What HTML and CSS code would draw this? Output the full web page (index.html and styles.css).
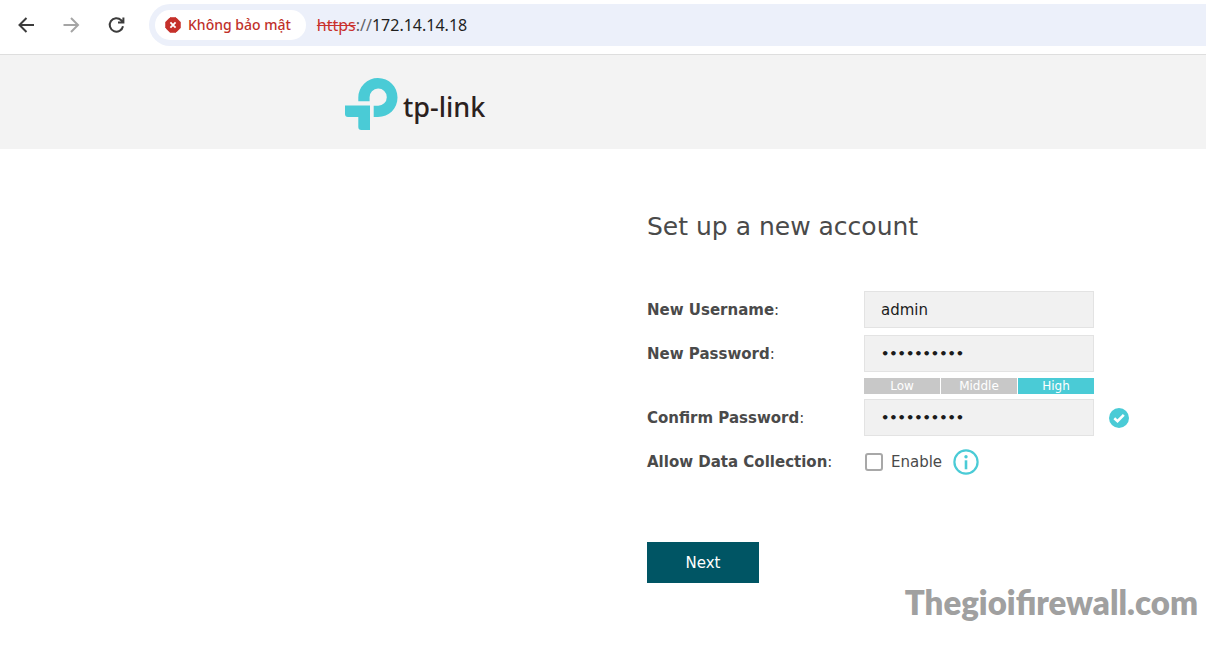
FILE: index.html
```html
<!DOCTYPE html>
<html lang="en">
<head>
<meta charset="utf-8">
<title>TP-Link</title>
<link rel="stylesheet" href="styles.css">
</head>
<body>
<nav class="toolbar" aria-label="Browser">
  <button class="nav-btn" type="button" aria-label="Back">
    <svg width="20" height="20" viewBox="0 0 20 20"><path d="M18 10H4M10.500 3L3.500 10l7 7"/></svg>
  </button>
  <button class="nav-btn nav-off" type="button" aria-label="Forward">
    <svg width="20" height="20" viewBox="0 0 20 20"><path d="M2.5 10h14M10 3l7 7-7 7"/></svg>
  </button>
  <button class="nav-btn" type="button" aria-label="Reload">
    <svg width="20" height="20" viewBox="0 0 20 20"><path d="M17 11.200A6.700 6.700 0 1 1 15.200 5.200L17 7M17.400 2.400v5.200h-5.400"/></svg>
  </button>
  <div class="address">
    <button class="chip" type="button" lang="vi">
      <svg width="16" height="16" viewBox="0 0 16 16"><path fill="#c5302a" d="M5 .8h6L15.2 5v6L11 15.2H5L.8 11V5z" stroke="#c5302a" stroke-linejoin="round"/><path d="M5.4 5.4l5.2 5.2M10.6 5.4l-5.2 5.2" stroke="#fff" stroke-width="1.8"/></svg>
      Không bảo mật
    </button>
    <span class="url"><s>https</s><span class="scheme">://</span>172.14.14.18</span>
  </div>
</nav>

<header class="brand-bar">
  <div class="brand">
    <svg width="53" height="53" viewBox="0 0 53 53" fill="#4acbd6"><path d="M13.300 23.200V19.500A19.600 19.500 0 0 1 33 0C44 0 52.500 8.500 52.500 19.500S44 39 33 39H28.700V27.800H33A8.600 8.600 0 1 0 24.600 19.500V23.200Z"/><path d="M0 27.500H25V52H16.300Q13.300 52 13.300 49V39H3Q0 39 0 36Z"/></svg>
    <span class="wordmark">tp-link</span>
  </div>
</header>

<main class="content">
  <h1>Set up a new account</h1>
  <form class="form">
    <label class="label" for="user"><b>New Username</b>:</label>
    <div class="field"><input class="box" id="user" type="text" value="admin"></div>

    <label class="label" for="pass"><b>New Password</b>:</label>
    <div class="field"><input class="box secret" id="pass" type="password" value="abcdefghij"></div>

    <div class="strength">
      <span>Low</span><span>Middle</span><span class="on">High</span>
    </div>

    <label class="label" for="confirm"><b>Confirm Password</b>:</label>
    <div class="field">
      <input class="box secret" id="confirm" type="password" value="abcdefghij">
      <svg class="ok" width="20" height="20" viewBox="0 0 20 20"><circle cx="10" cy="10" r="10" fill="#4acbd6"/><path d="M5.300 10.300L8.500 13.200 14.800 6.800" fill="none" stroke="#fff" stroke-width="2.600"/></svg>
    </div>

    <span class="label"><b>Allow Data Collection</b>:</span>
    <div class="field data">
      <input class="tick" id="enable" type="checkbox">
      <label class="enable" for="enable">Enable</label>
      <button class="info" type="button" aria-label="Information">
        <svg width="26" height="26" viewBox="0 0 26 26"><circle cx="13" cy="13" r="11.600" fill="none" stroke="#4acbd6" stroke-width="2.200"/><circle cx="13" cy="7.700" r="1.700" fill="#4acbd6"/><path d="M13 11.300v9" stroke="#4acbd6" stroke-width="2.600"/></svg>
      </button>
    </div>

    <button class="next" type="submit">Next</button>
  </form>
  <div class="watermark">Thegioifirewall.com</div>
</main>
</body>
</html>
```
FILE: styles.css
```css
* {
  box-sizing: border-box;
}

body {
  margin: 0;
  background: #fff;
  color: #4a4a4a;
  font: 15px/20px "DejaVu Sans", Verdana, sans-serif;
}

svg {
  display: block;
  flex: none;
}

button {
  border: 0;
  padding: 0;
  background: none;
  font: inherit;
  cursor: pointer;
}

.toolbar {
  display: flex;
  align-items: center;
  gap: 25px;
  height: 55px;
  padding: 0 0 5px 16px;
  border-bottom: 1px solid #dedede;
  font-family: "Noto Sans", "Segoe UI", sans-serif;
}

.nav-btn svg {
  fill: none;
  stroke: #3c3c3c;
  stroke-width: 2;
}

.nav-off svg {
  stroke: #a5a5a5;
}

.address {
  display: flex;
  align-items: center;
  flex: 1;
  gap: 11px;
  height: 42px;
  margin-left: -2px;
  padding-left: 6px;
  border-radius: 21px 0 0 21px;
  background: #ecf0fa;
}

.chip {
  display: flex;
  align-items: center;
  gap: 7px;
  height: 30px;
  padding: 0 15px 0 10px;
  border-radius: 15px;
  background: #fff;
  color: #c0302a;
  font-size: 14px;
  font-weight: 500;
  white-space: nowrap;
}

.url {
  color: #1f1f1f;
  font-size: 16px;
}

.url s {
  color: #c9302c;
}

.scheme {
  color: #5f6368;
}

.brand-bar {
  height: 94px;
  padding: 23px 0 0 calc(50% - 258px);
  background: #f3f3f3;
}

.brand {
  display: flex;
  align-items: center;
  gap: 5px;
}

.wordmark {
  padding-top: 4px;
  color: #2b211e;
  font: 500 27px/32px "Noto Sans", sans-serif;
}

.content {
  padding: 60px 0 0 calc(50% + 44px);
}

h1 {
  margin: 0 0 46px;
  font-size: 25px;
  font-weight: 400;
  line-height: 36px;
}

.form {
  display: grid;
  grid-template-columns: 217px 1fr;
  align-items: center;
  row-gap: 7px;
}

.field {
  display: flex;
  align-items: center;
}

.box {
  width: 230px;
  height: 37px;
  border: 1px solid #e3e3e3;
  border-radius: 0;
  padding: 0 16px;
  background: #f1f1f1;
  color: #1b1b1b;
  font: 15px "DejaVu Sans", Verdana, sans-serif;
}

.secret {
  font-size: 13px;
  font-weight: 700;
}

.strength {
  display: grid;
  grid-column: 2;
  grid-template-columns: repeat(3, 1fr);
  gap: 1px;
  width: 230px;
  margin: -1px 0 -2px;
  color: #fff;
  font-size: 12px;
  line-height: 16px;
  text-align: center;
}

.strength span {
  background: #c8c8c8;
}

.strength .on {
  background: #4acbd6;
}

.ok {
  margin-left: 15px;
}

.data {
  height: 37px;
}

.tick {
  appearance: none;
  width: 18px;
  height: 18px;
  margin: 0 8px 0 1px;
  border: 2px solid #a8a8a8;
  border-radius: 3px;
  background: #fff;
}

.tick:checked {
  background: #4acbd6;
}

.info {
  margin-left: 11px;
}

.next {
  width: 112px;
  height: 41px;
  margin-top: 55px;
  background: #005564;
  color: #fff;
}

.watermark {
  padding-right: 8px;
  color: #a0a0a0;
  font: 800 33px/38px Lato, Calibri, sans-serif;
  text-align: right;
}
```
